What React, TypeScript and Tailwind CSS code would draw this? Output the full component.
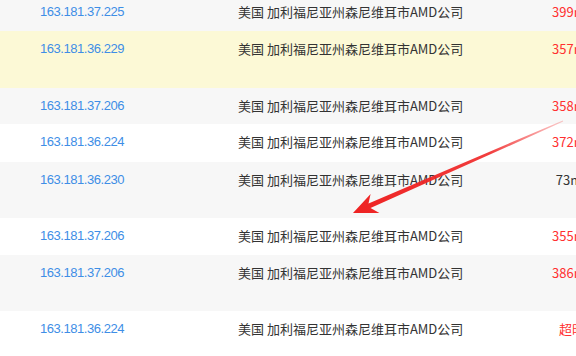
const rows = [
  { ip: "163.181.37.225", ms: "399ms", bg: "bg-[#f7f7f7]", h: "h-[37px] -mt-[6px]", red: true },
  { ip: "163.181.36.229", ms: "357ms", bg: "bg-[#fcf9d6]", h: "h-[57px]", red: true },
  { ip: "163.181.37.206", ms: "358ms", bg: "bg-[#f7f7f7]", h: "h-[36px]", red: true },
  { ip: "163.181.36.224", ms: "372ms", bg: "bg-white", h: "h-[38px]", red: true },
  { ip: "163.181.36.230", ms: "73ms", bg: "bg-[#f7f7f7]", h: "h-[56px]", red: false },
  { ip: "163.181.37.206", ms: "355ms", bg: "bg-white", h: "h-[37px]", red: true },
  { ip: "163.181.37.206", ms: "386ms", bg: "bg-[#f7f7f7]", h: "h-[56px]", red: true },
  { ip: "163.181.36.224", ms: "超时", bg: "bg-white", h: "h-[56px]", red: true },
];

const App: React.FC = () => {
  return (
    <div className="relative w-[576px] h-[356px] overflow-hidden bg-white font-['Liberation_Sans','Noto_Sans_CJK_SC',sans-serif]">
      <div className="w-[640px] flex flex-col">
        {rows.map((r, i) => (
          <div key={i} className={`flex shrink-0 items-start pt-2 leading-[20px] ${r.bg} ${r.h}`}>
            <div className="w-[238px] shrink-0 pl-[40px] text-[13px] tracking-[-0.45px] text-[#3e8ee6]">{r.ip}</div>
            <div className="w-[294px] shrink-0 text-[13px] text-[#333] font-['Noto_Sans_CJK_SC',sans-serif]">
              美国 加利福尼亚州森尼维耳市AMD公司
            </div>
            <div
              className={`w-[80px] shrink-0 text-center text-[13px] font-['Noto_Sans_CJK_SC',sans-serif] ${
                r.red ? "text-[#ff3030]" : "text-[#333]"
              }`}
            >
              {r.ms}
            </div>
          </div>
        ))}
      </div>

      {/* annotation arrow drawn over the table */}
      <svg className="absolute inset-0 pointer-events-none" width="576" height="356" viewBox="0 0 576 356">
        <defs>
          <linearGradient id="arr" x1="563" y1="121" x2="353" y2="213" gradientUnits="userSpaceOnUse">
            <stop offset="0" stopColor="#f23030" stopOpacity="0.25" />
            <stop offset="0.35" stopColor="#f02828" stopOpacity="0.9" />
            <stop offset="1" stopColor="#ee2222" />
          </linearGradient>
        </defs>
        <polygon
          fill="url(#arr)"
          points="562.8,120.4 368.5,203.5 370.6,194.0 353,213 379.4,213.0 370.5,208.1 563.2,121.6"
        />
      </svg>
    </div>
  );
};

export default App;
